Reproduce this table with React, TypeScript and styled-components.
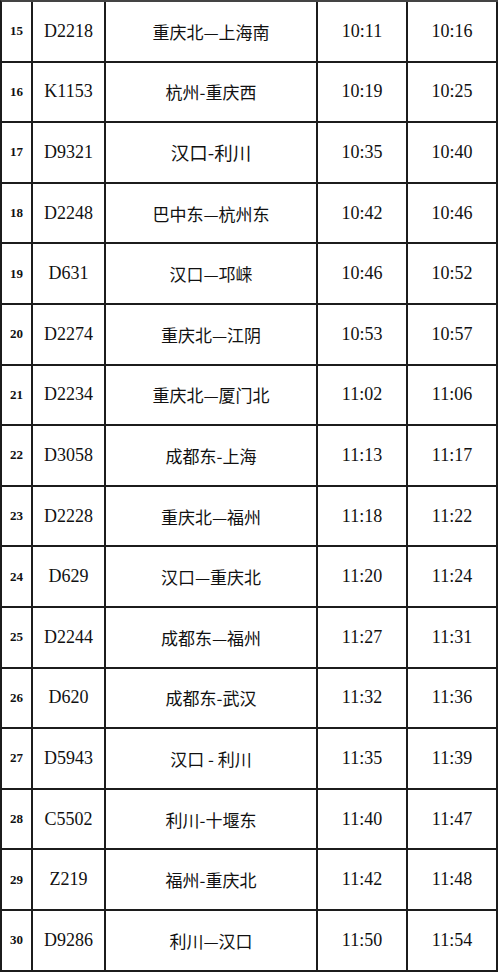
import React from "react";
import styled, { createGlobalStyle } from "styled-components";

const GlobalStyle = createGlobalStyle`
  html, body {
    margin: 0;
    padding: 0;
    background: #ffffff;
  }
`;

const Grid = styled.div`
  display: grid;
  grid-template-columns: 31px 73px 212px 90px 90px;
  grid-auto-rows: 60.6px;
  width: max-content;
  border-left: 2px solid #1c1c1c;
  border-top: 2px solid #444;
  color: #111;
  background: #fff;
`;

const Cell = styled.div`
  box-sizing: border-box;
  display: flex;
  align-items: center;
  justify-content: center;
  border-right: 2px solid #1c1c1c;
  border-bottom: 2px solid #1c1c1c;
  white-space: nowrap;
`;

const NumCell = styled(Cell)`
  font-family: "Liberation Serif", "Times New Roman", serif;
  font-weight: bold;
  font-size: 13px;
`;

const SerifCell = styled(Cell)`
  font-family: "Liberation Serif", "Times New Roman", serif;
  font-size: 18px;
`;

const RouteCell = styled(Cell)<{ $big?: boolean }>`
  font-family: "Noto Sans CJK SC", "Noto Sans", sans-serif;
  font-size: ${(p) => (p.$big ? 18.5 : 17)}px;
`;

type Train = {
  no: number;
  code: string;
  route: string;
  arrive: string;
  leave: string;
  big?: boolean;
};

const trains: Train[] = [
  { no: 15, code: "D2218", route: "重庆北—上海南", arrive: "10:11", leave: "10:16" },
  { no: 16, code: "K1153", route: "杭州-重庆西", arrive: "10:19", leave: "10:25" },
  { no: 17, code: "D9321", route: "汉口-利川", arrive: "10:35", leave: "10:40", big: true },
  { no: 18, code: "D2248", route: "巴中东—杭州东", arrive: "10:42", leave: "10:46" },
  { no: 19, code: "D631", route: "汉口—邛崃", arrive: "10:46", leave: "10:52" },
  { no: 20, code: "D2274", route: "重庆北—江阴", arrive: "10:53", leave: "10:57" },
  { no: 21, code: "D2234", route: "重庆北—厦门北", arrive: "11:02", leave: "11:06" },
  { no: 22, code: "D3058", route: "成都东-上海", arrive: "11:13", leave: "11:17" },
  { no: 23, code: "D2228", route: "重庆北—福州", arrive: "11:18", leave: "11:22" },
  { no: 24, code: "D629", route: "汉口—重庆北", arrive: "11:20", leave: "11:24" },
  { no: 25, code: "D2244", route: "成都东—福州", arrive: "11:27", leave: "11:31" },
  { no: 26, code: "D620", route: "成都东-武汉", arrive: "11:32", leave: "11:36" },
  { no: 27, code: "D5943", route: "汉口 - 利川", arrive: "11:35", leave: "11:39" },
  { no: 28, code: "C5502", route: "利川-十堰东", arrive: "11:40", leave: "11:47" },
  { no: 29, code: "Z219", route: "福州-重庆北", arrive: "11:42", leave: "11:48" },
  { no: 30, code: "D9286", route: "利川—汉口", arrive: "11:50", leave: "11:54" },
];

export default function App() {
  return (
    <>
      <GlobalStyle />
      <Grid>
        {trains.map((t) => (
          <React.Fragment key={t.no}>
            <NumCell>{t.no}</NumCell>
            <SerifCell>{t.code}</SerifCell>
            <RouteCell $big={t.big}>{t.route}</RouteCell>
            <SerifCell>{t.arrive}</SerifCell>
            <SerifCell>{t.leave}</SerifCell>
          </React.Fragment>
        ))}
      </Grid>
    </>
  );
}
